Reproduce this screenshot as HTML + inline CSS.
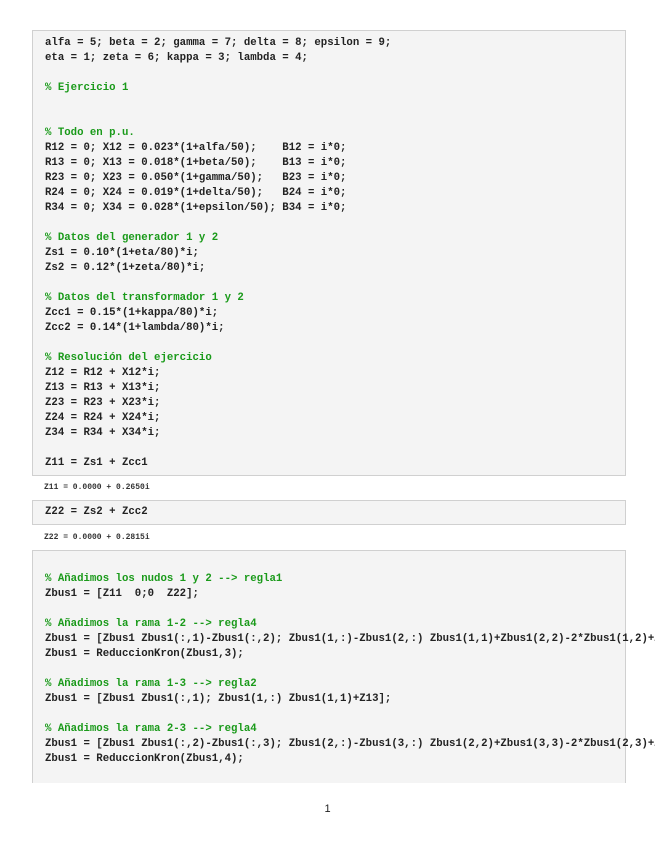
<!DOCTYPE html>
<html><head><meta charset="utf-8"><style>
html,body{margin:0;padding:0;background:#fff;width:655px;height:848px;overflow:hidden;position:relative}
.box{position:absolute;left:32px;width:592px;background:#f4f4f4;border:1px solid #d0d0d0;overflow:visible}
pre{margin:0;font-family:"Liberation Mono",monospace;font-weight:bold;font-size:10.7px;line-height:15px;color:#222;white-space:pre;padding-left:12px;letter-spacing:0}
.c{color:#1a9a1a}
.out{position:absolute;left:44px;font-family:"Liberation Mono",monospace;font-weight:bold;font-size:8px;color:#333;white-space:pre}
</style></head><body>
<div class="box" style="top:30px;height:444px"><pre style="padding-top:5px">alfa = 5; beta = 2; gamma = 7; delta = 8; epsilon = 9;
eta = 1; zeta = 6; kappa = 3; lambda = 4;

<span class="c">% Ejercicio 1</span>


<span class="c">% Todo en p.u.</span>
R12 = 0; X12 = 0.023*(1+alfa/50);    B12 = i*0;
R13 = 0; X13 = 0.018*(1+beta/50);    B13 = i*0;
R23 = 0; X23 = 0.050*(1+gamma/50);   B23 = i*0;
R24 = 0; X24 = 0.019*(1+delta/50);   B24 = i*0;
R34 = 0; X34 = 0.028*(1+epsilon/50); B34 = i*0;

<span class="c">% Datos del generador 1 y 2</span>
Zs1 = 0.10*(1+eta/80)*i;
Zs2 = 0.12*(1+zeta/80)*i;

<span class="c">% Datos del transformador 1 y 2</span>
Zcc1 = 0.15*(1+kappa/80)*i;
Zcc2 = 0.14*(1+lambda/80)*i;

<span class="c">% Resolución del ejercicio</span>
Z12 = R12 + X12*i;
Z13 = R13 + X13*i;
Z23 = R23 + X23*i;
Z24 = R24 + X24*i;
Z34 = R34 + X34*i;

Z11 = Zs1 + Zcc1</pre></div>
<div class="out" style="top:483px">Z11 = 0.0000 + 0.2650i</div>
<div class="box" style="top:500px;height:23px"><pre style="padding-top:4px">Z22 = Zs2 + Zcc2</pre></div>
<div class="out" style="top:533px">Z22 = 0.0000 + 0.2815i</div>
<div class="box" style="top:550px;height:232px;border-bottom:none"><pre style="padding-top:21px"><span class="c">% Añadimos los nudos 1 y 2 --> regla1</span>
Zbus1 = [Z11  0;0  Z22];

<span class="c">% Añadimos la rama 1-2 --> regla4</span>
Zbus1 = [Zbus1 Zbus1(:,1)-Zbus1(:,2); Zbus1(1,:)-Zbus1(2,:) Zbus1(1,1)+Zbus1(2,2)-2*Zbus1(1,2)+Z12];
Zbus1 = ReduccionKron(Zbus1,3);

<span class="c">% Añadimos la rama 1-3 --> regla2</span>
Zbus1 = [Zbus1 Zbus1(:,1); Zbus1(1,:) Zbus1(1,1)+Z13];

<span class="c">% Añadimos la rama 2-3 --> regla4</span>
Zbus1 = [Zbus1 Zbus1(:,2)-Zbus1(:,3); Zbus1(2,:)-Zbus1(3,:) Zbus1(2,2)+Zbus1(3,3)-2*Zbus1(2,3)+Z23];
Zbus1 = ReduccionKron(Zbus1,4);</pre></div>
<div style="position:absolute;top:803px;left:0;width:655px;text-align:center;font-family:'Liberation Sans',sans-serif;font-size:11px;color:#222">1</div>
</body></html>
